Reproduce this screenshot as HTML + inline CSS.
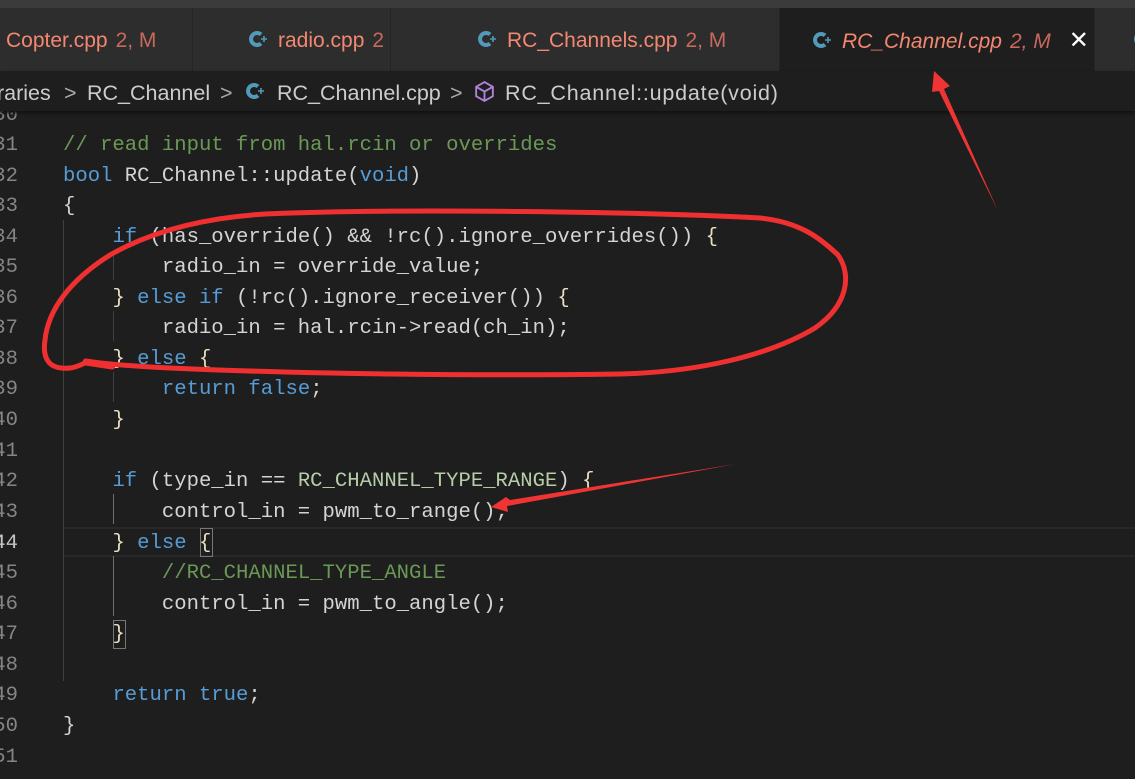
<!DOCTYPE html>
<html><head><meta charset="utf-8"><style>
*{margin:0;padding:0;box-sizing:border-box}
body{width:1135px;height:773px;overflow:hidden;background:#1e1e1e;position:relative;font-family:"Liberation Sans",sans-serif}
.top{position:absolute;left:0;top:0;width:1135px;height:8px;background:#3b3b3b}
.tabs{position:absolute;left:0;top:8px;width:1135px;height:63px;background:#252526}
.tab{position:absolute;top:0;height:63px;background:#2d2d2d;border-right:1px solid #252526;color:#f48771;font-size:21px;line-height:66px;white-space:nowrap}
.tab .m{color:#c9695d;margin-left:8px;font-size:21px}
.tab.act{background:#1e1e1e}
.cpp{display:inline-block;width:20px;height:20px;vertical-align:-2px;margin-right:10px}
.bc{position:absolute;left:0;top:71px;width:1135px;height:40px;background:#1e1e1e;color:#cccccc;font-size:21.5px;line-height:44px;white-space:nowrap;box-shadow:0 2px 3px #111}
.bc span,.bc svg{position:absolute;top:0}
.code{position:absolute;left:0;top:6px;width:1135px;height:773px;font-family:"Liberation Mono",monospace;font-size:20.6px;color:#d4d4d4;white-space:pre}
.ln{position:absolute;left:-12px;width:30px;text-align:right;color:#858585}
.l{position:absolute;left:63px}
.k{color:#569cd6}.c{color:#6a9955}.n{color:#b5cea8}.b{color:#e8e0c0}
.g{position:absolute;width:1px;background:#404040}
</style></head><body>
<div class="code">
<div style="position:absolute;left:63px;top:521px;width:1072px;height:30px;border-top:2px solid #282828;border-bottom:2px solid #282828"></div>
<div class="g" style="left:63px;top:214px;height:461px"></div>
<div class="g" style="left:113px;top:244px;height:30px"></div>
<div class="g" style="left:113px;top:305px;height:30px"></div>
<div class="g" style="left:113px;top:366px;height:30px"></div>
<div class="g" style="left:113px;top:488px;height:30px;background:#707070"></div>
<div class="g" style="left:113px;top:550px;height:60px;background:#707070"></div>
<div style="position:absolute;left:200px;top:522px;width:13px;height:29px;border:1px solid #777"></div>
<div style="position:absolute;left:113px;top:614px;width:13px;height:29px;border:1px solid #777"></div>
<div class="ln" style="top:98px">30</div>
<div class="ln" style="top:128px">31</div><div class="l" style="top:128px"><span class="c">// read input from hal.rcin or overrides</span></div>
<div class="ln" style="top:159px">32</div><div class="l" style="top:159px"><span class="k">bool</span> RC_Channel::update(<span class="k">void</span>)</div>
<div class="ln" style="top:189px">33</div><div class="l" style="top:189px">{</div>
<div class="ln" style="top:220px">34</div><div class="l" style="top:220px">    <span class="k">if</span> (has_override() &amp;&amp; !rc().ignore_overrides()) <span class="b">{</span></div>
<div class="ln" style="top:250px">35</div><div class="l" style="top:250px">        radio_in = override_value;</div>
<div class="ln" style="top:281px">36</div><div class="l" style="top:281px">    <span class="b">}</span> <span class="k">else if</span> (!rc().ignore_receiver()) <span class="b">{</span></div>
<div class="ln" style="top:311px">37</div><div class="l" style="top:311px">        radio_in = hal.rcin-&gt;read(ch_in);</div>
<div class="ln" style="top:342px">38</div><div class="l" style="top:342px">    <span class="b">}</span> <span class="k">else</span> <span class="b">{</span></div>
<div class="ln" style="top:372px">39</div><div class="l" style="top:372px">        <span class="k">return false</span>;</div>
<div class="ln" style="top:403px">40</div><div class="l" style="top:403px">    <span class="b">}</span></div>
<div class="ln" style="top:434px">41</div>
<div class="ln" style="top:464px">42</div><div class="l" style="top:464px">    <span class="k">if</span> (type_in == <span class="n">RC_CHANNEL_TYPE_RANGE</span>) <span class="b">{</span></div>
<div class="ln" style="top:495px">43</div><div class="l" style="top:495px">        control_in = pwm_to_range();</div>
<div class="ln" style="top:526px;color:#c6c6c6">44</div><div class="l" style="top:526px">    <span class="b">}</span> <span class="k">else</span> <span class="b">{</span></div>
<div class="ln" style="top:556px">45</div><div class="l" style="top:556px">        <span class="c">//RC_CHANNEL_TYPE_ANGLE</span></div>
<div class="ln" style="top:587px">46</div><div class="l" style="top:587px">        control_in = pwm_to_angle();</div>
<div class="ln" style="top:617px">47</div><div class="l" style="top:617px">    <span class="b">}</span></div>
<div class="ln" style="top:648px">48</div>
<div class="ln" style="top:678px">49</div><div class="l" style="top:678px">    <span class="k">return true</span>;</div>
<div class="ln" style="top:709px">50</div><div class="l" style="top:709px">}</div>
<div class="ln" style="top:740px">51</div>
</div>
<div class="top"></div>
<div class="tabs">
<div class="tab" style="left:0;width:193px;padding-left:6px">Copter.cpp<span class="m">2, M</span></div>
<div class="tab" style="left:193px;width:198px;padding-left:55px"><svg class="cpp" viewBox="0 0 20 20"><path d="M13 5.5A6 6 0 1 0 13 14.5" fill="none" stroke="#519aba" stroke-width="4"/><path d="M13 10h6M16 7v6" stroke="#519aba" stroke-width="1.6"/></svg>radio.cpp<span class="m">2</span></div>
<div class="tab" style="left:391px;width:389px;padding-left:86px"><svg class="cpp" viewBox="0 0 20 20"><path d="M13 5.5A6 6 0 1 0 13 14.5" fill="none" stroke="#519aba" stroke-width="4"/><path d="M13 10h6M16 7v6" stroke="#519aba" stroke-width="1.6"/></svg>RC_Channels.cpp<span class="m">2, M</span></div>
<div class="tab act" style="left:780px;width:315px;padding-left:32px;font-style:italic"><svg class="cpp" viewBox="0 0 20 20"><path d="M13 5.5A6 6 0 1 0 13 14.5" fill="none" stroke="#519aba" stroke-width="4"/><path d="M13 10h6M16 7v6" stroke="#519aba" stroke-width="1.6"/></svg>RC_Channel.cpp<span class="m">2, M</span><span style="font-style:normal;color:#fff;margin-left:18px;font-size:24px">✕</span></div>
<div class="tab" style="left:1095px;width:60px;padding-left:38px"><svg class="cpp" viewBox="0 0 20 20"><path d="M13 5.5A6 6 0 1 0 13 14.5" fill="none" stroke="#519aba" stroke-width="4"/></svg></div>
</div>
<div class="bc">
<span style="left:-3px">raries</span>
<span style="left:64px;color:#aaa">&gt;</span>
<span style="left:87px">RC_Channel</span>
<span style="left:220px;color:#aaa">&gt;</span>
<svg style="left:245px;top:10px" width="20" height="20" viewBox="0 0 20 20"><path d="M13 5.5A6 6 0 1 0 13 14.5" fill="none" stroke="#519aba" stroke-width="4"/><path d="M13 10h6M16 7v6" stroke="#519aba" stroke-width="1.6"/></svg>
<span style="left:277px">RC_Channel.cpp</span>
<span style="left:450px;color:#aaa">&gt;</span>
<svg style="left:473px;top:9px" width="23" height="23" viewBox="0 0 22 22"><path d="M11 2L19 6.5V15.5L11 20L3 15.5V6.5Z M3 6.5L11 11L19 6.5M11 11V20" fill="none" stroke="#b180d7" stroke-width="1.8"/></svg>
<span style="left:505px;letter-spacing:0.8px">RC_Channel::update(void)</span>
</div>
<svg style="position:absolute;left:0;top:0" width="1135" height="773">
<path d="M265 214 C400 208 650 212 760 218 C800 222 820 238 838 255 C852 275 848 305 815 328 C770 355 700 372 620 374 C480 376 300 374 170 368 C120 366 95 362 90 362 C88 360 80 367 70 368 C50 370 42 360 45 340 C48 310 70 280 110 255 C150 232 200 218 265 214 Z" fill="none" stroke="#f03030" stroke-width="5" stroke-linejoin="round"/>
<path d="M86 362 L112 366" stroke="#f03030" stroke-width="7" stroke-linecap="round"/>
<polygon points="998,211 944,89 950,86 934,71 932,92 939,91" fill="#f03434"/>
<polygon points="736,464 510,500 506,497 491,507 508,512 507,506" fill="#f03434"/>
</svg>
</body></html>
